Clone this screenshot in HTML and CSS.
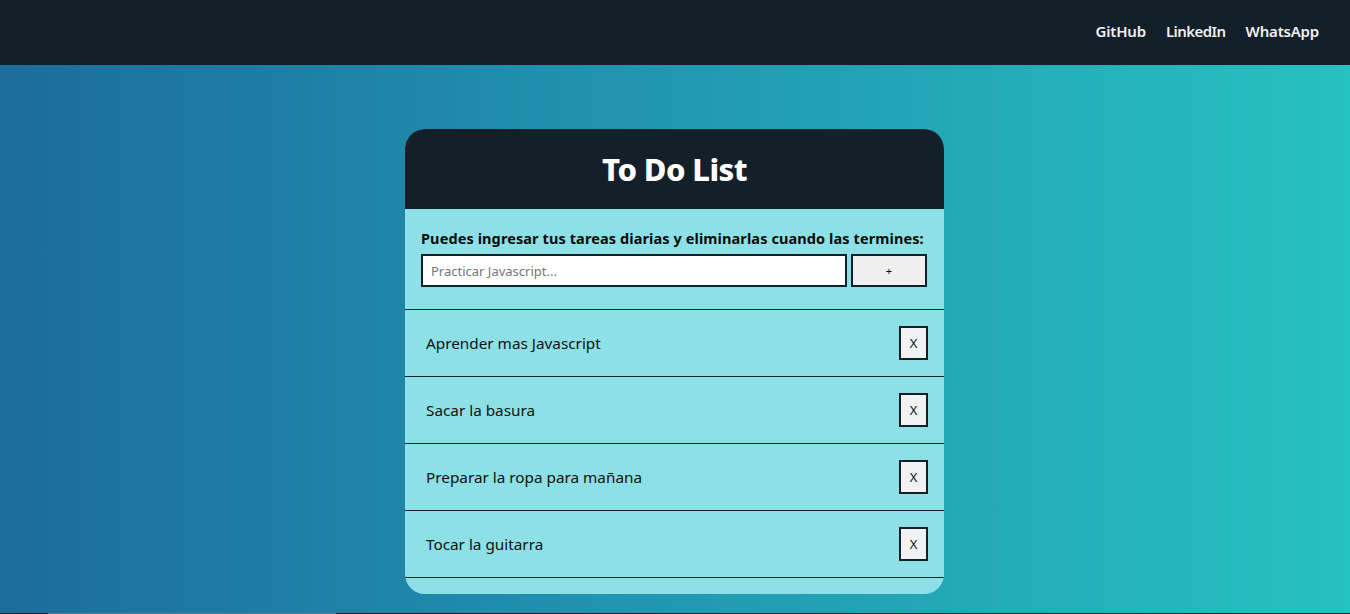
FILE: index.html
```html
<!DOCTYPE html>
<html lang="es">
<head>
<meta charset="utf-8">
<title>To Do List</title>
<link rel="stylesheet" href="styles.css">
</head>
<body>
<header class="navbar">
  <nav class="nav-links">
    <a href="#">GitHub</a>
    <a href="#">LinkedIn</a>
    <a href="#">WhatsApp</a>
  </nav>
</header>
<main class="main">
  <section class="card">
    <div class="card-head"><h1>To Do List</h1></div>
    <div class="card-form">
      <p class="label">Puedes ingresar tus tareas diarias y eliminarlas cuando las termines:</p>
      <div class="form-row">
        <input class="task-input" type="text" placeholder="Practicar Javascript...">
        <button class="add-btn">+</button>
      </div>
    </div>
    <ul class="tasks">
      <li class="task"><span>Aprender mas Javascript</span><button class="del-btn">X</button></li>
      <li class="task"><span>Sacar la basura</span><button class="del-btn">X</button></li>
      <li class="task"><span>Preparar la ropa para mañana</span><button class="del-btn">X</button></li>
      <li class="task"><span>Tocar la guitarra</span><button class="del-btn">X</button></li>
    </ul>
  </section>
</main>
<footer class="footer"><div class="footer-bar"></div></footer>
</body>
</html>
```
FILE: styles.css
```css
* { box-sizing: border-box; }
html, body { margin: 0; padding: 0; }
body {
  font-family: "Noto Sans", "Open Sans", sans-serif;
  background: linear-gradient(90deg, #1c6c9c 0%, #2193b0 45%, #26c1c1 100%);
  color: #111;
}
.navbar {
  height: 65px;
  background: #131f29;
  display: flex;
  justify-content: flex-end;
  align-items: center;
  padding-right: 31px;
  padding-bottom: 3px;
}
.nav-links { display: flex; gap: 20px; }
.nav-links a {
  color: #f1f1f1;
  text-decoration: none;
  font-size: 15px;
  font-weight: 600;
  letter-spacing: -0.2px;
}
.nav-links a:nth-child(2) { letter-spacing: -0.55px; }
.main {
  height: 548px;
  display: flex;
  justify-content: center;
  padding-top: 64px;
  padding-right: 1px;
}
.card {
  width: 539px;
  height: 465px;
  background: #8de1e6;
  border-radius: 20px;
  overflow: hidden;
}
.card-head {
  height: 80px;
  background: #131f29;
  display: flex;
  align-items: center;
  justify-content: center;
}
.card-head h1 {
  margin: 0;
  color: #fff;
  font-size: 31px;
  font-weight: 800;
  letter-spacing: -0.6px;
}
.card-form {
  padding: 19px 16px 22px 16px;
  border-bottom: 1px solid #131f29;
}
.label {
  margin: 0 0 6px 0;
  font-size: 14.5px;
  font-weight: 700;
  color: #0b0b0b;
  letter-spacing: 0.1px;
  white-space: nowrap;
}
.form-row { display: flex; gap: 4px; }
.task-input {
  width: 426px;
  height: 33px;
  border: 2px solid #131f29;
  padding: 0 8px;
  font-family: inherit;
  font-size: 13px;
  background: #fff;
}
.task-input::placeholder { color: #767676; }
.add-btn {
  width: 76px;
  height: 33px;
  border: 2px solid #131f29;
  background: #efefef;
  font-size: 11px;
  font-family: inherit;
  padding: 0;
}
.tasks { list-style: none; margin: 0; padding: 0; }
.task {
  height: 67px;
  border-bottom: 1px solid #131f29;
  display: flex;
  align-items: center;
  justify-content: space-between;
  padding: 0 16px 0 21px;
  font-size: 15.3px;
  color: #111;
}
.del-btn {
  width: 29px;
  height: 34px;
  border: 2px solid #131f29;
  background: #f2f2f2;
  font-family: inherit;
  font-size: 13px;
  padding: 0;
  color: #111;
}
.footer { height: 60px; background: #131f29; padding-left: 48px; }
.footer-bar { width: 288px; height: 2px; background: #5f7b86; }
```
